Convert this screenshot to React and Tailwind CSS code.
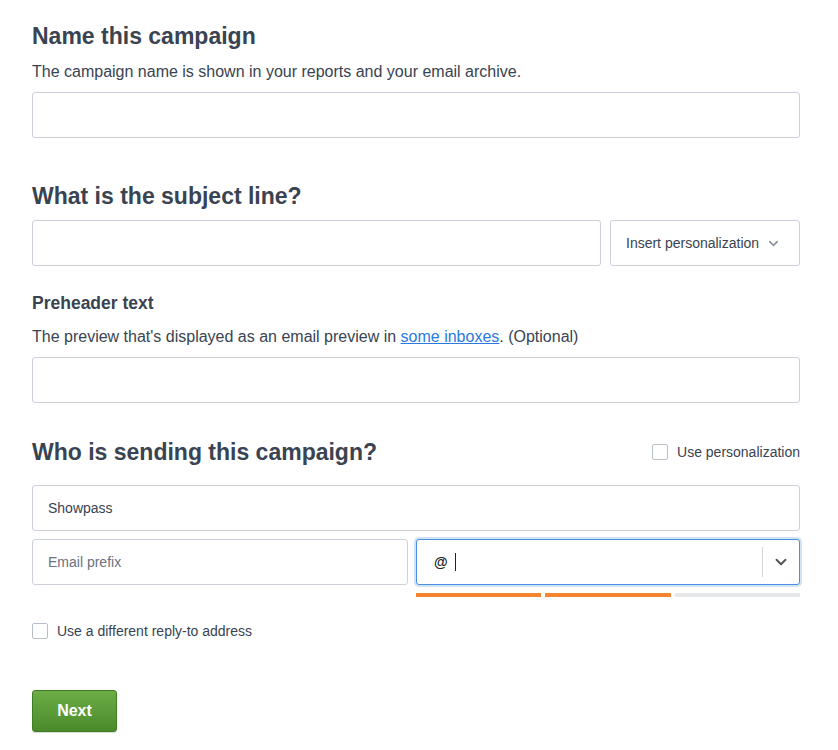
import { ChevronDown } from 'lucide-react';

const inputCls =
  'h-[46px] px-[15px] bg-white border border-[#ccd1da] rounded-[3px] text-[14px] text-[#394351] placeholder:text-[#6b7280] focus:outline-none';

export default function App() {
  return (
    <div className="min-h-screen bg-white font-['Liberation_Sans',Arial,sans-serif] text-[#394351]">
      <div className="w-[768px] ml-[32px] pt-[22px] pb-10">
        <h1 className="text-[23px] leading-[28px] font-bold">Name this campaign</h1>
        <p className="mt-3 text-[16px] leading-[20px]">
          The campaign name is shown in your reports and your email archive.
        </p>
        <input type="text" className={`${inputCls} w-full mt-[10px] block`} />

        <h2 className="mt-[44px] text-[23px] leading-[28px] font-bold">What is the subject line?</h2>
        <div className="mt-[10px] flex gap-[9px]">
          <input type="text" className={`${inputCls} flex-1 min-w-0`} />
          <button className="w-[190px] h-[46px] shrink-0 flex items-center justify-between pl-[15px] pr-[18px] bg-white border border-[#ccd1da] rounded-[3px] text-[14px] text-[#394351]">
            Insert personalization
            <ChevronDown size={15} strokeWidth={2.5} className="text-[#8a919c]" />
          </button>
        </div>

        <h3 className="mt-[26px] text-[17.5px] leading-[22px] font-bold">Preheader text</h3>
        <p className="mt-[13px] text-[16px] leading-[20px]">
          The preview that's displayed as an email preview in{' '}
          <a href="#" className="text-[#2a7ae2] underline">some inboxes</a>. (Optional)
        </p>
        <input type="text" className={`${inputCls} w-full mt-[10px] block`} />

        <div className="mt-[35px] flex items-center justify-between">
          <h2 className="text-[23px] leading-[28px] font-bold">Who is sending this campaign?</h2>
          <label className="flex items-center gap-[9px] text-[14px]">
            <span className="w-4 h-4 border border-[#b9bfc8] rounded-[2px] bg-white" />
            Use personalization
          </label>
        </div>

        <input type="text" defaultValue="Showpass" className={`${inputCls} w-full mt-[19px] block`} />

        <div className="mt-[8px] flex gap-[8px]">
          <input type="text" placeholder="Email prefix" className={`${inputCls} w-[376px] shrink-0`} />
          <div className="flex-1 min-w-0">
            <div className="h-[46px] flex items-center bg-white border border-[#4a90e2] rounded-[3px] shadow-[0_0_0_2px_rgba(74,144,226,0.25)]">
              <span className="pl-[17px] text-[14px] font-bold text-[#222]">@</span>
              <span className="ml-[7px] w-px h-[18px] bg-[#222]" />
              <span className="flex-1" />
              <span className="w-px h-[30px] bg-[#d1d5db]" />
              <span className="w-[36px] flex justify-center">
                <ChevronDown size={18} strokeWidth={2.5} className="text-[#555]" />
              </span>
            </div>
            <div className="mt-[8px] flex gap-[4px]">
              <div className="flex-1 h-[4px] bg-[#f5862f]" />
              <div className="flex-1 h-[4px] bg-[#f5862f]" />
              <div className="flex-1 h-[4px] bg-[#e6e7e9]" />
            </div>
          </div>
        </div>

        <label className="mt-[24px] flex items-center gap-[9px] text-[14px] leading-[20px]">
          <span className="w-4 h-4 border border-[#b9bfc8] rounded-[2px] bg-white" />
          Use a different reply-to address
        </label>

        <button className="mt-[49px] w-[85px] h-[42px] rounded-[3px] border border-[#3f7d22] bg-gradient-to-b from-[#6cad45] to-[#4a8a2b] text-white text-[16px] font-bold shadow-[0_1px_1px_rgba(0,0,0,0.15)]">
          Next
        </button>
      </div>
    </div>
  );
}
